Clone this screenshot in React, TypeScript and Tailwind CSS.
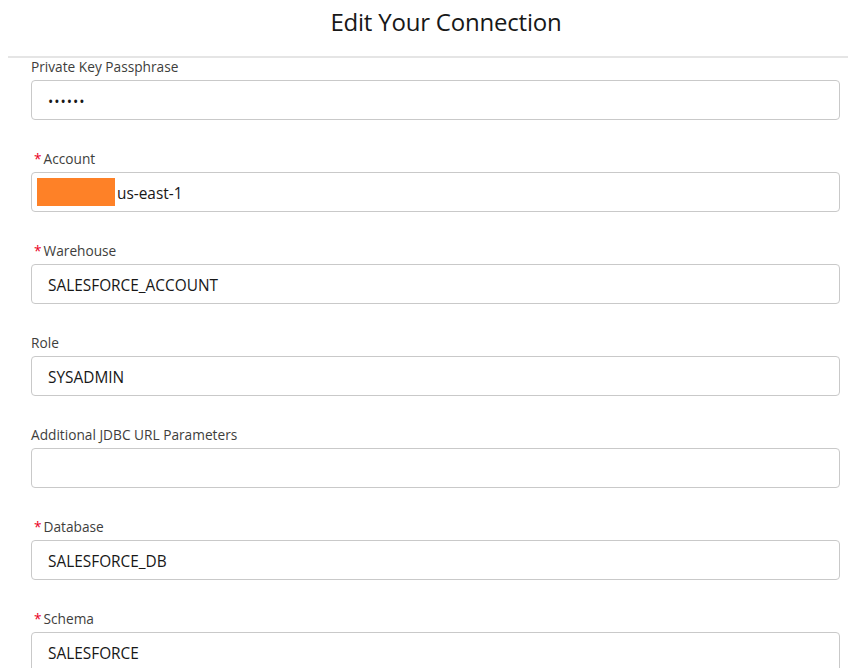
import React from "react";

const fields: { label: string; required?: boolean; value: string; kind?: "password" | "account" }[] = [
  { label: "Private Key Passphrase", value: "••••••", kind: "password" },
  { label: "Account", required: true, value: "us-east-1", kind: "account" },
  { label: "Warehouse", required: true, value: "SALESFORCE_ACCOUNT" },
  { label: "Role", value: "SYSADMIN" },
  { label: "Additional JDBC URL Parameters", value: "" },
  { label: "Database", required: true, value: "SALESFORCE_DB" },
  { label: "Schema", required: true, value: "SALESFORCE" },
];

export default function App() {
  return (
    <div
      className="w-[848px] h-[668px] overflow-hidden bg-white text-[#181818]"
      style={{ fontFamily: '"Open Sans", "Noto Sans", sans-serif' }}
    >
      <div className="ml-[8px] w-[876px]">
        <div className="h-[56px] flex items-center justify-center">
          <h1 className="text-[24px] leading-[30px] font-normal tracking-[-0.2px] text-[#181818] -mt-[13px]">
            Edit Your Connection
          </h1>
        </div>
        <div className="h-[2px] bg-[#e5e5e5]" />
      </div>
      <div className="pl-[31px] w-[840px]">
        {fields.map((f) => (
          <div key={f.label} className="pb-[30px]">
            <div className="h-[18px] flex items-center text-[13.7px] leading-[18px] text-[#3e3e3c] mb-[4px]">
              {f.required && <span className="text-[#ea001e] ml-[3px] mr-[2px]">*</span>}
              <span>{f.label}</span>
            </div>
            <div className="h-[40px] border border-[#c9c9c9] rounded-[4px] flex items-center pl-[16px] pt-[3px] text-[15.4px] text-[#181818]">
              {f.kind === "account" ? (
                <div className="flex items-center -ml-[11px] -mt-[3px]">
                  <div className="w-[78px] h-[28px] bg-[#fe8127]" />
                  <span className="ml-[2px] mt-[3px]">{f.value}</span>
                </div>
              ) : f.kind === "password" ? (
                <span className="text-[14px] tracking-[1px]">{f.value}</span>
              ) : (
                <span>{f.value}</span>
              )}
            </div>
          </div>
        ))}
      </div>
    </div>
  );
}
